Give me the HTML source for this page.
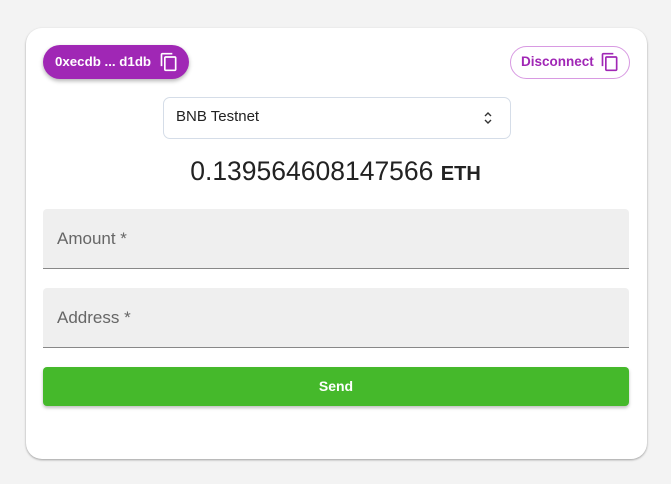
<!DOCTYPE html>
<html><head><style>
body{margin:0;width:671px;height:484px;background:#f3f3f3;font-family:"Liberation Sans",sans-serif;position:relative;overflow:hidden}
.card{position:absolute;left:26px;top:28px;width:621px;height:431px;background:#fff;border-radius:16px;box-shadow:0 1px 2px rgba(0,0,0,.35)}
.a{position:absolute}
.pill{left:43px;top:45px;width:146px;height:34px;border-radius:17px;background:#a027b5;box-shadow:0 2px 4px rgba(0,0,0,.3);color:#fff;font-weight:bold;font-size:13.3px}
.disc{left:510px;top:46px;width:118px;height:31px;border:1px solid #d89ae2;border-radius:17px;color:#a027b5;font-weight:bold;font-size:13.5px}
.sel{left:163px;top:97px;width:346px;height:40px;border:1px solid #d5dde8;border-radius:7px;font-size:15px;color:#222}
.fld{left:43px;width:586px;height:59px;background:#efefef;border-radius:4px 4px 0 0;border-bottom:1px solid #888;font-size:17px;color:#666}
.send{left:43px;top:367px;width:586px;height:39px;background:#45b92b;border-radius:4px;box-shadow:0 2px 3px rgba(0,0,0,.25);color:#fff;font-weight:bold;font-size:14px;text-align:center;line-height:39px}
</style></head><body>
<div class="card"></div>
<div class="a pill"><span class="a" style="left:12px;top:9px">0xecdb ... d1db</span>
<svg class="a" style="left:116px;top:7px" width="20" height="20" viewBox="0 0 24 24"><path fill="#fff" d="M16 1H4c-1.1 0-2 .9-2 2v14h2V3h12V1zm3 4H8c-1.1 0-2 .9-2 2v14c0 1.1.9 2 2 2h11c1.1 0 2-.9 2-2V7c0-1.1-.9-2-2-2zm0 16H8V7h11v14z"/></svg></div>
<div class="a disc"><span class="a" style="left:10px;top:7px">Disconnect</span>
<svg class="a" style="left:89px;top:5px" width="20" height="20" viewBox="0 0 24 24"><path fill="#a027b5" d="M16 1H4c-1.1 0-2 .9-2 2v14h2V3h12V1zm3 4H8c-1.1 0-2 .9-2 2v14c0 1.1.9 2 2 2h11c1.1 0 2-.9 2-2V7c0-1.1-.9-2-2-2zm0 16H8V7h11v14z"/></svg></div>
<div class="a sel"><span class="a" style="left:12px;top:10px">BNB Testnet</span>
<svg class="a" style="left:319px;top:13px" width="10" height="14" viewBox="0 0 10 14"><path d="M2 5l3-3 3 3M2 9l3 3 3-3" fill="none" stroke="#333" stroke-width="1.4"/></svg></div>
<div class="a" style="left:0;width:671px;top:156px;text-align:center;font-size:26.5px;color:#222">0.139564608147566 <span style="font-weight:bold;font-size:20px">ETH</span></div>
<div class="a fld" style="top:209px"><span class="a" style="left:14px;top:20px">Amount *</span></div>
<div class="a fld" style="top:288px"><span class="a" style="left:14px;top:20px">Address *</span></div>
<div class="a send">Send</div>
</body></html>
